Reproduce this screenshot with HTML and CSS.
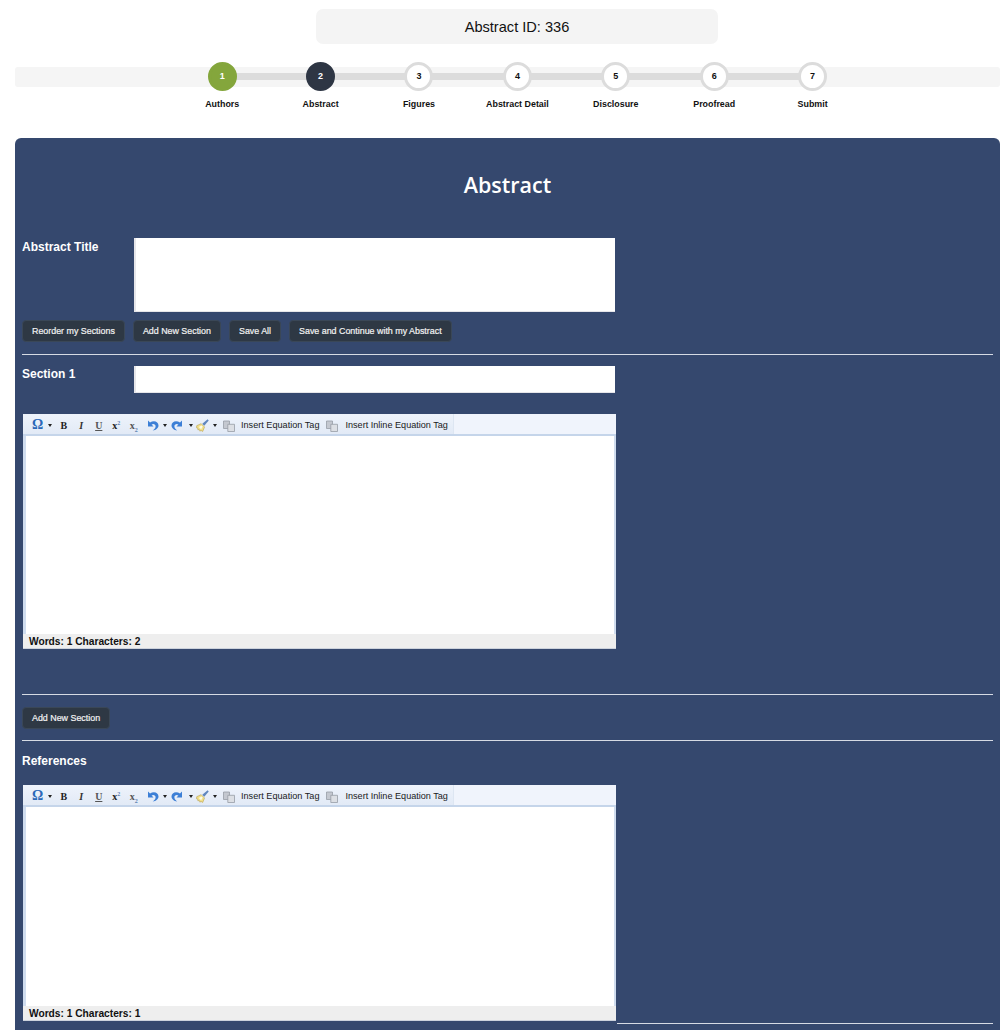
FILE: index.html
```html
<!DOCTYPE html>
<html lang="en">
<head>
<meta charset="utf-8">
<title>Abstract</title>
<link rel="stylesheet" href="styles.css">
</head>
<body>
<svg class="defs" width="0" height="0" aria-hidden="true">
  <defs>
    <symbol id="i-undo" viewBox="0 0 13 13"><path d="M2 1.500V7.500h5.500L5.600 5.500C7.500 4.300 9.600 5.300 9.600 7.300c0 1.700-1.100 3-2.900 4.200 3.400-.4 5.800-2.400 5.800-5C12.500 2.700 8 .8 4 3.500z" fill="#3c7fd6"/></symbol>
    <symbol id="i-redo" viewBox="0 0 13 13"><path d="M11 1.500V7.500H5.500L7.400 5.500C5.500 4.300 3.400 5.300 3.400 7.300c0 1.700 1.100 3 2.900 4.200C2.900 11.100.5 9.100.5 6.500.5 2.700 5 .8 9 3.500z" fill="#3c7fd6"/></symbol>
    <symbol id="i-brush" viewBox="0 0 14 14"><path d="M.8 7.200 5.600 5l3.600 3.600-2 4.800-1.800-1.100-1.200.8-.6-1.700-1.600.2-.1-1.800-1.300-.3z" fill="#f2e08a" stroke="#b49c45" stroke-width=".6"/><path d="M3 8.500 6 7l1.200 1.200-1.700 2.800z" fill="#fdfbe8"/><path d="m6.800 5.200 5.700-4.800 1.200 1.200-4.800 5.700z" fill="#5f86bd"/></symbol>
    <symbol id="i-copy" viewBox="0 0 12 12"><path d="M.5 1h6v7.500h-6z" fill="#c4c8d0" stroke="#979da6" stroke-width=".8"/><path d="M4.800 4.300h6.700v7.200H4.800z" fill="#dcdfe4" stroke="#979da6" stroke-width=".8"/></symbol>
  </defs>
</svg>
<div class="page">
  <div class="abstract-id">Abstract ID: 336</div>
  <div class="stepper">
    <ol class="steps">
      <li class="step done"><span class="dot">1</span><span class="step-label">Authors</span></li>
      <li class="step current"><span class="dot">2</span><span class="step-label">Abstract</span></li>
      <li class="step"><span class="dot">3</span><span class="step-label">Figures</span></li>
      <li class="step"><span class="dot">4</span><span class="step-label">Abstract Detail</span></li>
      <li class="step"><span class="dot">5</span><span class="step-label">Disclosure</span></li>
      <li class="step"><span class="dot">6</span><span class="step-label">Proofread</span></li>
      <li class="step"><span class="dot">7</span><span class="step-label">Submit</span></li>
    </ol>
  </div>
  <main class="panel">
    <h1 class="panel-title">Abstract</h1>
    <div class="field title-field">
      <label class="field-label">Abstract Title</label>
      <div class="text-box title-box"></div>
    </div>
    <div class="actions">
      <button class="btn">Reorder my Sections</button>
      <button class="btn">Add New Section</button>
      <button class="btn">Save All</button>
      <button class="btn">Save and Continue with my Abstract</button>
    </div>
    <hr class="rule rule-a">
    <div class="field section-field">
      <label class="field-label">Section 1</label>
      <div class="text-box section-box"></div>
    </div>
    <section class="editor">
      <div class="toolbar">
        <div class="tools">
          <span class="tool omega">Ω</span><span class="caret"></span>
          <span class="tool fmt b">B</span>
          <span class="tool fmt i">I</span>
          <span class="tool fmt u">U</span>
          <span class="tool fmt sup">x<sup>2</sup></span>
          <span class="tool fmt sub">x<sub>2</sub></span>
          <svg class="ico undo"><use href="#i-undo"/></svg><span class="caret"></span>
          <svg class="ico redo"><use href="#i-redo"/></svg><span class="caret wide"></span>
          <svg class="ico"><use href="#i-brush"/></svg><span class="caret"></span>
          <svg class="ico small first"><use href="#i-copy"/></svg>
          <span class="tool-text">Insert Equation Tag</span>
          <svg class="ico small"><use href="#i-copy"/></svg>
          <span class="tool-text last">Insert Inline Equation Tag</span>
        </div>
      </div>
      <div class="edit-area"></div>
      <div class="status">Words: 1 Characters: 2</div>
    </section>
    <hr class="rule rule-b">
    <div class="actions single">
      <button class="btn">Add New Section</button>
    </div>
    <hr class="rule rule-c">
    <div class="refs-label field-label">References</div>
    <section class="editor">
      <div class="toolbar">
        <div class="tools">
          <span class="tool omega">Ω</span><span class="caret"></span>
          <span class="tool fmt b">B</span>
          <span class="tool fmt i">I</span>
          <span class="tool fmt u">U</span>
          <span class="tool fmt sup">x<sup>2</sup></span>
          <span class="tool fmt sub">x<sub>2</sub></span>
          <svg class="ico undo"><use href="#i-undo"/></svg><span class="caret"></span>
          <svg class="ico redo"><use href="#i-redo"/></svg><span class="caret wide"></span>
          <svg class="ico"><use href="#i-brush"/></svg><span class="caret"></span>
          <svg class="ico small first"><use href="#i-copy"/></svg>
          <span class="tool-text">Insert Equation Tag</span>
          <svg class="ico small"><use href="#i-copy"/></svg>
          <span class="tool-text last">Insert Inline Equation Tag</span>
        </div>
      </div>
      <div class="edit-area tall"></div>
      <div class="status">Words: 1 Characters: 1</div>
    </section>
    <hr class="rule rule-d">
  </main>
</div>
</body>
</html>
```

FILE: styles.css
```css
* { box-sizing: border-box; }
html, body { margin: 0; height: 1030px; overflow: hidden; background: #fff; }
body { font-family: "Liberation Sans", Arial, sans-serif; color: #111; }
.defs { position: absolute; }
.page { padding: 9px 0 0 15px; width: 1000px; }
.abstract-id {
  width: 402px; height: 35px; margin-left: 301px;
  background: #f4f4f4; border-radius: 7px;
  font-size: 14.600px; line-height: 37px; text-align: center; color: #111;
}
.stepper { margin-top: 23px; height: 20px; background: #f5f5f5; border-radius: 3px; }
.steps {
  list-style: none; margin: 0 0 0 158px; padding: 0; width: 688.800px;
  display: grid; grid-template-columns: repeat(7, 1fr);
}
.step { position: relative; display: flex; flex-direction: column; align-items: center; margin-top: -5px; }
.step::before {
  content: ""; position: absolute; top: 11px; left: 50%; width: 100%; height: 7px; background: #dcdcdc;
}
.step:last-child::before { display: none; }
.dot {
  position: relative; width: 29px; height: 29px; border-radius: 50%;
  background: #fff; border: 3px solid #dcdcdc; color: #111;
  font-size: 9px; font-weight: 700; line-height: 23px; text-align: center;
}
.done .dot { background: #84a63c; border-color: #84a63c; color: #fff; }
.current .dot { background: #2e3644; border-color: #2e3644; color: #fff; }
.step-label { margin-top: 7.500px; font-size: 8.900px; line-height: 11px; font-weight: 700; color: #111; white-space: nowrap; }
.panel {
  margin-top: 51px; height: 892px; padding: 1px 7px 0; background: #35486e; border-radius: 6px 6px 0 0;
}
.panel-title {
  margin: 30px 0 0; font-family: "Open Sans", sans-serif; font-size: 21.500px; font-weight: 600;
  line-height: 32px; text-align: center; color: #fff;
}
.field { display: flex; }
.field-label { display: block; width: 112px; font-size: 12px; font-weight: 700; line-height: 16px; color: #fff; }
.title-field { margin-top: 37px; }
.title-field .field-label { padding-top: 1px; }
.text-box { width: 481px; background: #fff; border-left: 2px solid #e6e6ea; border-bottom: 1px solid #e6e6ea; }
.title-box { height: 74px; }
.actions { display: flex; gap: 8px; margin-top: 8px; }
.btn {
  height: 22px; padding: 0 9px; background: #2e3844; border: 1px solid #3a4757; border-radius: 4px;
  font-family: "Liberation Sans", Arial, sans-serif; font-size: 8.900px; font-weight: 400; line-height: 20px; color: #f2f2f2;
  -webkit-text-stroke: .2px #f2f2f2;
  white-space: nowrap;
}
.rule { height: 1px; margin: 0; border: 0; background: #d6dbe4; }
.rule-a { margin-top: 12px; }
.section-field { margin-top: 11px; }
.section-box { height: 27px; }
.editor { width: 593px; margin: 21px 0 0 1px; }
.toolbar { height: 22px; background: #f0f4fc; border-bottom: 2px solid #c5d5ea; }
.tools {
  display: inline-flex; align-items: center; height: 20px; padding: 2px 5px 0 8px;
  background: linear-gradient(#eef3fb, #e2eaf6); border-right: 1px solid #dde6f2; white-space: nowrap;
}
.tool { display: inline-block; color: #222; }
.omega { width: 13px; font-family: "Liberation Serif", serif; font-size: 14px; font-weight: 700; color: #2a68b8; text-align: center; }
.fmt { width: 17.500px; font-family: "Liberation Serif", serif; font-size: 10px; font-weight: 700; text-align: center; }
.i { font-style: italic; color: #333; }
.u { text-decoration: underline; color: #555; }
.fmt sup, .fmt sub { font-size: 6px; line-height: 0; color: #5d7fb0; }
.sub { color: #555; }
.caret { width: 0; height: 0; margin: 0 3px 0 4px; border: 2.500px solid transparent; border-top: 3px solid #222; border-bottom: 0; }
.caret.wide { margin-left: 5.500px; }
.ico { width: 13px; height: 13px; flex: none; }
.ico.undo { margin-left: 3px; }
.ico.redo { margin-left: 1px; }
.ico.small { width: 12px; height: 12px; margin-left: 7px; margin-top: 2px; }
.ico.small.first { margin-left: 3px; }
.tool-text { margin-left: 6px; font-size: 9.150px; color: #1a1a22; }
.tool-text.last { margin-left: 7px; font-size: 9.100px; }
.edit-area { height: 198px; background: #fff; border-left: 3px solid #cfdcee; border-right: 2px solid #cfdcee; }
.edit-area.tall { height: 199px; }
.status { height: 15px; padding-left: 6px; background: #eee; border-bottom: 1px solid #ccd2dc; font-size: 10.200px; font-weight: 700; line-height: 15px; color: #111; }
.rule-b { margin-top: 45px; }
.single { margin-top: 12px; }
.rule-c { margin-top: 11px; }
.refs-label { width: auto; margin-top: 12px; }
.refs-label + .editor { margin-top: 16px; }
.rule-d { margin: 2px 0 0 595px; }
```
